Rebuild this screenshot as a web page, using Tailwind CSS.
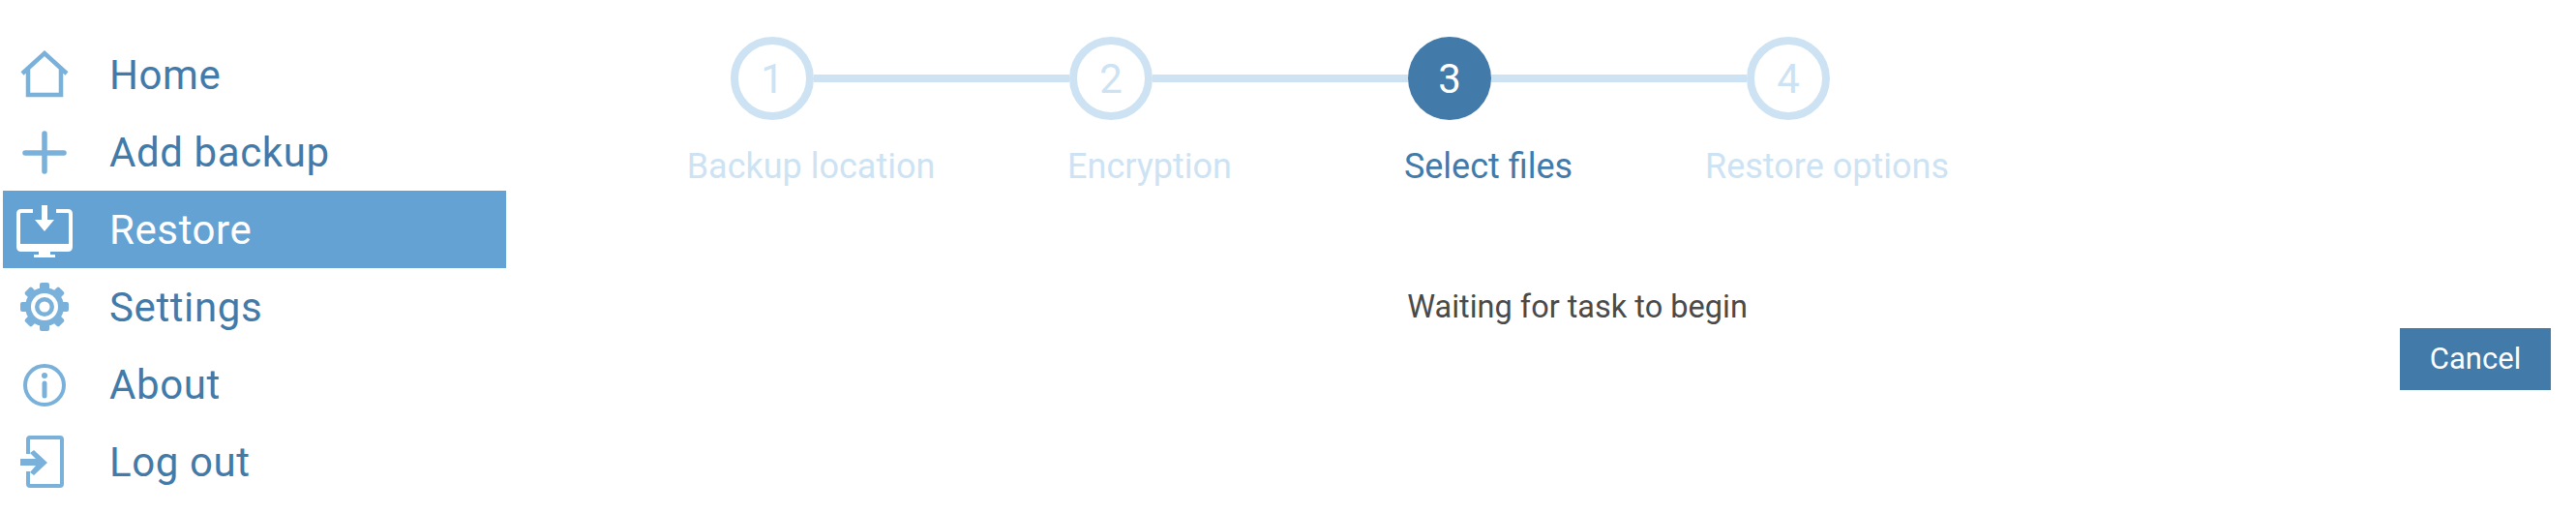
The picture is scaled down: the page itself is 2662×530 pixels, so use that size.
<!DOCTYPE html>
<html lang="en">
<head>
  <meta charset="UTF-8"/>
  <title>Restore</title>
  <script src="https://cdn.jsdelivr.net/npm/@tailwindcss/browser@4"></script>
</head>
<body class="bg-white font-['Roboto',sans-serif]">
<div class="flex w-[2662px] h-[530px] overflow-hidden">

  <!-- sidebar -->
  <nav class="w-[520px] shrink-0 ml-[3px] pt-[37px] text-[42px] tracking-[0.6px] text-[#427aa9]">
    <a class="flex items-center h-[80px] pl-[13px]">
      <svg class="w-[60px] h-[60px] mr-[37px]" viewBox="0 0 60 60" fill="none" stroke="#7ab1db" stroke-width="4.5"><path d="M7 29 L30 8 L53 29 M13 24 V51 H47 V24"/></svg>
      Home
    </a>
    <a class="flex items-center h-[80px] pl-[13px]">
      <svg class="w-[60px] h-[60px] mr-[37px]" viewBox="0 0 60 60" fill="none" stroke="#7ab1db" stroke-width="5.5" stroke-linecap="round"><path d="M30 11 V50 M10 31 H50"/></svg>
      Add backup
    </a>
    <a class="flex items-center h-[80px] pl-[13px] bg-[#65a2d4] text-white">
      <svg class="w-[60px] h-[60px] mr-[37px]" viewBox="0 0 60 60" fill="none"><path d="M18 11 H6 Q3 11 3 14 V48 Q3 51 6 51 H54 Q57 51 57 48 V14 Q57 11 54 11 H42" stroke="#fff" stroke-width="4"/><path d="M3 45 H57 V48 Q57 52 54 52 H6 Q3 52 3 48 Z" fill="#fff"/><path d="M27 5 H33 V20 H40 L30 32 L20 20 H27 Z" fill="#fff"/><path d="M24 52 H36 V56 H41 V59 H19 V56 H24 Z" fill="#fff"/></svg>
      Restore
    </a>
    <a class="flex items-center h-[80px] pl-[13px]">
      <svg class="w-[60px] h-[60px] mr-[37px]" viewBox="0 0 60 60">
        <g fill="#7ab1db">
          <circle cx="30" cy="30" r="20"/>
          <rect x="25" y="5" width="10" height="50" rx="2"/>
          <rect x="25" y="5" width="10" height="50" rx="2" transform="rotate(45 30 30)"/>
          <rect x="25" y="5" width="10" height="50" rx="2" transform="rotate(90 30 30)"/>
          <rect x="25" y="5" width="10" height="50" rx="2" transform="rotate(135 30 30)"/>
        </g>
        <circle cx="30" cy="30" r="14" fill="#fff"/>
        <circle cx="30" cy="30" r="10" fill="#7ab1db"/>
        <circle cx="30" cy="30" r="5.5" fill="#fff"/>
      </svg>
      Settings
    </a>
    <a class="flex items-center h-[80px] pl-[13px]">
      <svg class="w-[60px] h-[60px] mr-[37px]" viewBox="0 0 60 60" fill="none" stroke="#7ab1db"><circle cx="30" cy="31" r="20" stroke-width="4"/><circle cx="30" cy="21" r="3" fill="#7ab1db" stroke="none"/><path d="M30 29 V42" stroke-width="5" stroke-linecap="round"/></svg>
      About
    </a>
    <a class="flex items-center h-[80px] pl-[13px]">
      <svg class="w-[60px] h-[60px] mr-[37px]" viewBox="0 0 60 60" fill="none"><path d="M13 22 V7 Q13 5 15 5 H46 Q48 5 48 7 V53 Q48 55 46 55 H15 Q13 55 13 53 V40" stroke="#7ab1db" stroke-width="4"/><path d="M5 27 H21 L15 21 L19 18 L33 31 L19 44 L15 41 L21 34 H5 Z" fill="#7ab1db"/></svg>
      Log out
    </a>
  </nav>

  <!-- main -->
  <main class="flex-1 flex flex-col">
    <div class="flex items-center ml-[232px] mt-[38px] h-[86px]">
      <div class="w-[86px] h-[86px] shrink-0 rounded-full border-[8px] border-[#cde3f3] flex items-center justify-center text-[42px] text-[#cde3f3]">1</div>
      <div class="w-[264px] h-[8px] bg-[#cde3f3]"></div>
      <div class="w-[86px] h-[86px] shrink-0 rounded-full border-[8px] border-[#cde3f3] flex items-center justify-center text-[42px] text-[#cde3f3]">2</div>
      <div class="w-[264px] h-[8px] bg-[#cde3f3]"></div>
      <div class="w-[86px] h-[86px] shrink-0 rounded-full bg-[#427aa9] flex items-center justify-center text-[42px] text-white">3</div>
      <div class="w-[264px] h-[8px] bg-[#cde3f3]"></div>
      <div class="w-[86px] h-[86px] shrink-0 rounded-full border-[8px] border-[#cde3f3] flex items-center justify-center text-[42px] text-[#cde3f3]">4</div>
    </div>
    <div class="grid grid-cols-4 w-[1400px] ml-[140px] mt-[21px] text-[36px] text-center text-[#cde3f3]">
      <div>Backup location</div>
      <div>Encryption</div>
      <div class="text-[#427aa9]">Select files</div>
      <div>Restore options</div>
    </div>
    <p class="mt-[102px] ml-[75px] text-center text-[32.5px] leading-none text-[#4a4a4a]">Waiting for task to begin</p>
    <div class="flex justify-end mr-[26px] mt-[5.5px]">
      <button class="w-[156px] h-[64px] bg-[#427aa9] text-white text-[31px]">Cancel</button>
    </div>
  </main>
</div>
</body>
</html>
